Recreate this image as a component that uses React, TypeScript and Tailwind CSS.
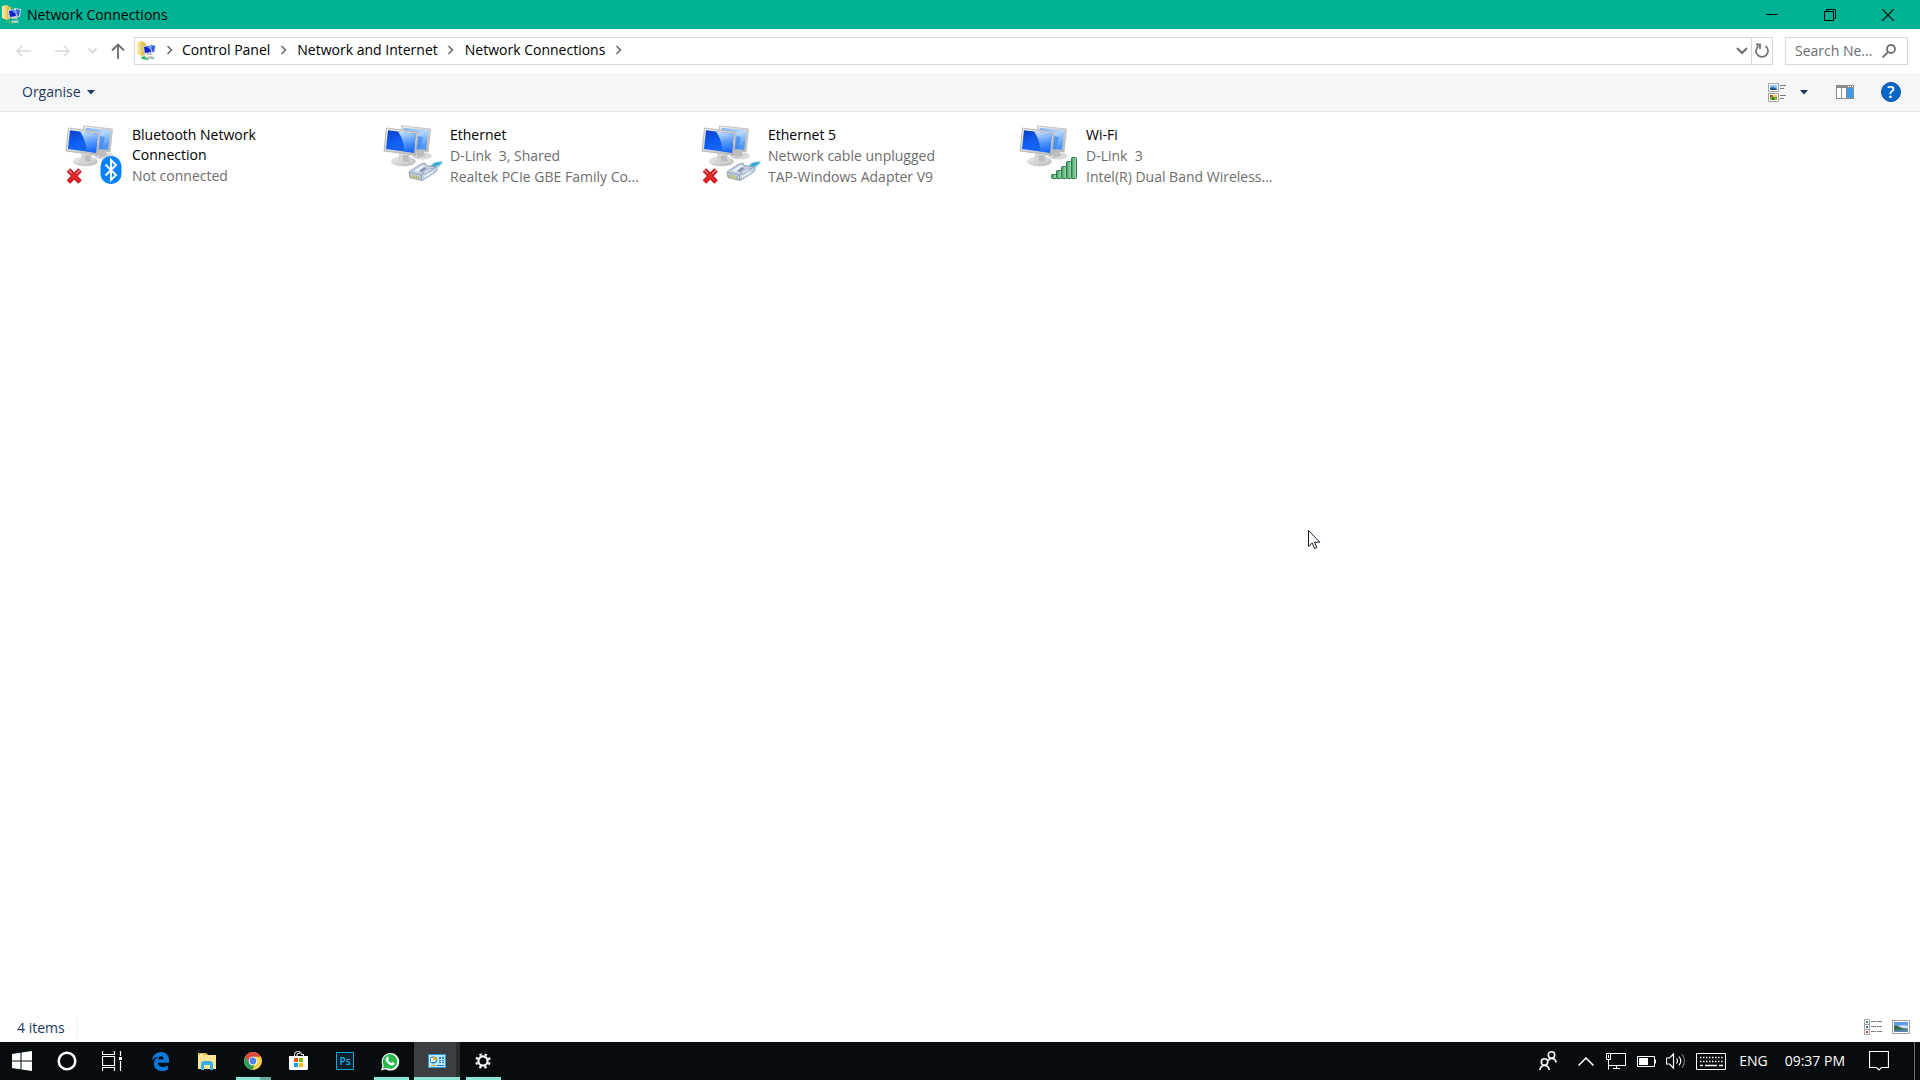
import { Fragment, ReactNode } from 'react';

type Badge = 'bluetooth' | 'cable' | 'signal';

interface Connection {
  name: string;
  details: string[];
  badge: Badge;
  disconnected?: boolean;
}

const connections: Connection[] = [
  { name: 'Bluetooth Network Connection', details: ['Not connected'], badge: 'bluetooth', disconnected: true },
  { name: 'Ethernet', details: ['D-Link  3, Shared', 'Realtek PCIe GBE Family Co...'], badge: 'cable' },
  { name: 'Ethernet 5', details: ['Network cable unplugged', 'TAP-Windows Adapter V9'], badge: 'cable', disconnected: true },
  { name: 'Wi-Fi', details: ['D-Link  3', 'Intel(R) Dual Band Wireless...'], badge: 'signal' },
];

const path = ['Control Panel', 'Network and Internet', 'Network Connections'];

// Gradients shared by the icons
const IconDefs = () => (
  <svg className="absolute h-0 w-0" aria-hidden="true">
    <defs>
      <linearGradient id="screenFront" x1="0" y1="0" x2="0.4" y2="1">
        <stop offset="0" stopColor="#0a3fc4" />
        <stop offset="0.5" stopColor="#0f5cf0" />
        <stop offset="1" stopColor="#1668fb" />
      </linearGradient>
      <linearGradient id="screenGlare" x1="0.3" y1="0" x2="0.5" y2="1">
        <stop offset="0" stopColor="#c6e0ff" />
        <stop offset="0.5" stopColor="#5c9dfa" />
        <stop offset="1" stopColor="#1767f8" />
      </linearGradient>
      <linearGradient id="screenBack" x1="0" y1="0" x2="0.4" y2="1">
        <stop offset="0" stopColor="#7db2f8" />
        <stop offset="0.45" stopColor="#b4d8ff" />
        <stop offset="1" stopColor="#4d95f2" />
      </linearGradient>
      <linearGradient id="metal" x1="0" y1="0" x2="1" y2="1">
        <stop offset="0" stopColor="#f4f4f4" />
        <stop offset="1" stopColor="#b4b4b4" />
      </linearGradient>
      <linearGradient id="signalBar" x1="0" y1="0" x2="1" y2="0">
        <stop offset="0" stopColor="#3f9763" />
        <stop offset="1" stopColor="#a8e2b8" />
      </linearGradient>
      <linearGradient id="folder" x1="0" y1="0" x2="1" y2="0">
        <stop offset="0" stopColor="#fff0b0" />
        <stop offset="1" stopColor="#d9b23c" />
      </linearGradient>
    </defs>
  </svg>
);

const NetworkIcon = ({ badge, disconnected }: { badge: Badge; disconnected?: boolean }) => (
  <svg width="60" height="62" viewBox="0 0 60 62" className="shrink-0" aria-hidden="true">
    <ellipse cx="39" cy="32" rx="10" ry="3.500" fill="#dadada" />
    <path d="M34 26l7 1 1 5-8 2z" fill="#bdbdbd" />
    <path d="M18.500 1.800l29 3.200-2.500 23-9-1-18-4z" fill="url(#metal)" stroke="#b9b9b9" strokeWidth="0.800" />
    <path d="M20.500 3.700l24.800 2.800-2.200 19.500-8-1-15-3z" fill="url(#screenBack)" />
    <path d="M35 12l5 1-3 12.500h-3z" fill="#3d86f2" opacity="0.700" />
    <ellipse cx="20.500" cy="37.500" rx="12" ry="4.500" fill="url(#metal)" stroke="#c4c4c4" strokeWidth="0.600" />
    <path d="M16 30l11 1c0 3 1 4 3 6-4 3-12 3-16 0 2-2 2.500-4 2-7z" fill="#d4d4d4" />
    <path d="M20 31l5 .5c0 3 1 4 2 6h-7z" fill="#bcbcbc" />
    <path d="M3.500 4l31.500 4.300-2 23L1 27z" fill="url(#metal)" stroke="#acacac" strokeWidth="0.800" />
    <path d="M5 6.300l27.700 3.500-1.700 19L3 25z" fill="url(#screenFront)" />
    <path d="M15 7.600l17.700 2.200-1.700 19-9.500-1.200c-.5-8-2.500-14-6.500-20z" fill="url(#screenGlare)" />
    {badge === 'bluetooth' && (
      <>
        <rect x="35.500" y="32" width="21" height="28" rx="10" ry="10.500" fill="#0a82fb" />
        <path d="M40.500 40.500l10.500 10.500-5 5V36l5 5-10.500 10.500" fill="none" stroke="#fff" strokeWidth="1.900" />
      </>
    )}
    {badge === 'cable' && (
      <>
        <path d="M47 42c3-4 6-4.500 13-5-1 3-4 7-9 9z" fill="#a4d5e8" />
        <path d="M49 41c4-3 6-2.500 10-3-2 3-5 4-8 5z" fill="#35a7d6" />
        <path d="M26 48l11-7.500 5-1.500 1 2.500 10 1.500c2 2 1 4-1 5.500l-13 8-12-3z" fill="#c3d0e3" stroke="#8996ac" strokeWidth="0.900" />
        <path d="M26.500 48.500l11.500 2.500 14-7.500M38.500 51v5.500" fill="none" stroke="#8f9db5" strokeWidth="0.900" />
        <path d="M31 47l8-5.500 4 .5-8 5.500z" fill="#eef3fa" />
        <path d="M39 48.500l8-4 3 .5-8 4.500z" fill="#e3ebf5" stroke="#8b9ab3" strokeWidth="0.600" />
        <path d="M36 47l5-4 3 1-5 4z" fill="#8494b0" />
        <path d="M27.500 50.500l9 2v3.500l-9-2z" fill="#a3ada8" />
        <path d="M29.500 51v3M32 51.500v3M34.500 52v3" stroke="#dfd56a" strokeWidth="1.200" />
        <path d="M41 52l9-5v2l-9 5z" fill="#e5edf7" />
      </>
    )}
    {badge === 'signal' && (
      <g fill="url(#signalBar)" stroke="#2d7a4d" strokeWidth="1">
        <rect x="32.500" y="50.500" width="5" height="4" rx="1" />
        <rect x="37.500" y="46.500" width="5" height="8" rx="1" />
        <rect x="42.500" y="42.500" width="5" height="12" rx="1" />
        <rect x="47.500" y="37.500" width="5" height="17" rx="1" />
        <rect x="52.500" y="33.500" width="5" height="21" rx="1" />
      </g>
    )}
    {disconnected && (
      <>
        <path d="M3.500 46l11.500 12M15 46L3.500 58" stroke="#b3141a" strokeWidth="4.800" />
        <path d="M3.500 46l11.500 12M15 46L3.500 58" stroke="#e6262b" strokeWidth="3.200" />
        <path d="M3.500 46l3.500 3.500M15 46l-3.500 3.500" stroke="#f58080" strokeWidth="1.500" />
      </>
    )}
  </svg>
);

const FolderNetworkIcon = () => (
  <svg width="20" height="20" viewBox="0 0 20 20" className="shrink-0" aria-hidden="true">
    <path d="M0 1l5-1 3 2v12l-3 1-5-2z" fill="url(#folder)" />
    <path d="M5 3l4-1v10l-4 2z" fill="#e2bf55" />
    <path d="M12 3l7 1-1 8-6-1z" fill="#d8d8d8" />
    <path d="M13 4l5 1-1 6-4-1z" fill="#2a5fe0" />
    <path d="M6 5l8-1 1 8-8 1z" fill="#cfd6e4" />
    <path d="M7 6l6-1 1 6-6 1z" fill="#0b24c8" />
    <path d="M10 6l3-1 1 4z" fill="#6ea0ff" />
    <path d="M10 12h5l1 2H9z" fill="#c4c4c4" />
    <path d="M4 16l4-1 1 2h8v1h-5l-1 1-6-1z" fill="#35b873" />
    <path d="M9 16l6-1 2 1-2 2h-5z" fill="#b5c7bf" />
  </svg>
);

const Chevron = () => (
  <svg width="8" height="10" viewBox="0 0 8 10" fill="none" stroke="#6d6d6d" strokeWidth="1.600" aria-hidden="true">
    <path d="M1.500 1l4 4-4 4" />
  </svg>
);

const Caret = () => (
  <svg width="8" height="5" viewBox="0 0 8 5" aria-hidden="true">
    <path d="M0 0h8L4 4.500z" fill="#1e395b" />
  </svg>
);

const TitleBar = () => (
  <header className="flex h-[29px] items-center justify-between bg-[#00b294]">
    <div className="flex items-center gap-[5px] pl-[2px]">
      <FolderNetworkIcon />
      <h1>Network Connections</h1>
    </div>
    <div className="flex pr-[3px]">
      <button type="button" aria-label="Minimise" className="flex h-7 w-[58px] items-center justify-center">
        <svg width="12" height="12" viewBox="0 0 12 12"><path d="M0 5.500h12" stroke="#000" /></svg>
      </button>
      <button type="button" aria-label="Restore" className="flex h-7 w-[58px] items-center justify-center">
        <svg width="12" height="12" viewBox="0 0 12 12" fill="none" stroke="#000">
          <path d="M.5 2.500h9v9h-9zM2.500 2.500v-2h9v9h-2" />
        </svg>
      </button>
      <button type="button" aria-label="Close" className="flex h-7 w-[58px] items-center justify-center">
        <svg width="12" height="12" viewBox="0 0 12 12"><path d="M0 0l12 12M12 0L0 12" stroke="#000" strokeWidth="1.200" /></svg>
      </button>
    </div>
  </header>
);

const AddressRow = () => (
  <div className="flex h-11 items-center pb-px pr-3">
    <nav aria-label="History" className="flex w-[134px] items-center pl-4">
      <button type="button" aria-label="Back" className="mr-6">
        <svg width="15" height="12" viewBox="0 0 15 12" fill="none" stroke="#d8d8d8" strokeWidth="1.500"><path d="M15 6H1M6 1L1 6l5 5" /></svg>
      </button>
      <button type="button" aria-label="Forward" className="mr-[18px]">
        <svg width="15" height="12" viewBox="0 0 15 12" fill="none" stroke="#d8d8d8" strokeWidth="1.500"><path d="M0 6h14M9 1l5 5-5 5" /></svg>
      </button>
      <button type="button" aria-label="Recent locations" className="mr-[14px]">
        <svg width="9" height="6" viewBox="0 0 9 6" fill="none" stroke="#d0d0d0" strokeWidth="1.500"><path d="M.5 .5l4 4 4-4" /></svg>
      </button>
      <button type="button" aria-label="Up">
        <svg width="14" height="16" viewBox="0 0 14 16" fill="none" stroke="#6d6d6d" strokeWidth="1.800"><path d="M7 16V1.500M1 7.500l6-6 6 6" /></svg>
      </button>
    </nav>
    <div className="flex h-7 flex-1 items-center border border-[#d9d9d9] pl-[2px]">
      <FolderNetworkIcon />
      <ol className="flex flex-1 items-center pb-px">
        <li className="flex w-[25px] justify-center"><Chevron /></li>
        {path.map((part) => (
          <Fragment key={part}>
            <li><a href="#" className="text-black">{part}</a></li>
            <li className="flex w-[27px] justify-center"><Chevron /></li>
          </Fragment>
        ))}
      </ol>
      <button type="button" aria-label="Previous locations" className="flex h-full w-[15px] items-center">
        <svg width="12" height="8" viewBox="0 0 12 8" fill="none" stroke="#6d6d6d" strokeWidth="2"><path d="M1 1l5 5 5-5" /></svg>
      </button>
      <button type="button" aria-label="Refresh" className="flex h-full w-[21px] items-center justify-center border-l border-[#d9d9d9]">
        <svg width="14" height="15" viewBox="0 0 14 15" fill="none" stroke="#757575" strokeWidth="1.800">
          <path d="M10.500 3A6 6 0 1 1 3.500 3M1 1.500h4v4.500" />
        </svg>
      </button>
    </div>
    <form role="search" className="ml-3 flex h-7 w-[123px] items-center border border-[#d9d9d9] pl-[9px] pr-[11px]">
      <input
        type="text"
        aria-label="Search Network Connections"
        placeholder="Search Ne..."
        className="w-full min-w-0 flex-1 outline-none placeholder:text-[#6d6d6d]"
      />
      <button type="button" aria-label="Search">
        <svg width="14" height="14" viewBox="0 0 14 14" fill="none" stroke="#6d6d6d" strokeWidth="1.800">
          <circle cx="9" cy="5" r="4" />
          <path d="M6 8l-5.500 5.500" />
        </svg>
      </button>
    </form>
  </div>
);

const CommandBar = () => (
  <div className="flex h-[39px] items-center justify-between border-b border-[#e5e7ea] bg-[#f4f6f8] pl-[22px] pr-[19px]">
    <button type="button" className="flex items-center gap-[6px] text-[#1e395b]">
      Organise <Caret />
    </button>
    <div className="flex items-center">
      <button type="button" aria-label="Change your view" className="mr-[14px]">
        <svg width="18" height="19" viewBox="0 0 18 19">
          <g fill="#fff" stroke="#a3a3a3">
            <path d="M.5 .5h10v8H.5zM.5 10.500h10v8H.5z" />
          </g>
          <path d="M2 2h7v5H2z" fill="#8cc0f0" />
          <path d="M2 5l3-1 4 2v1H2z" fill="#1f5c82" />
          <path d="M2 12h7v5H2z" fill="#7fae3a" />
          <path d="M2 12h2v2H2z" fill="#c43a2a" />
          <path d="M5 12h4v2H5z" fill="#e8ca4a" />
          <path d="M4 14h2v3H4z" fill="#2f6e2b" />
          <path d="M12 2.500h6M12 5.500h4M12 12.500h6M12 15.500h4" stroke="#7d7d7d" />
        </svg>
      </button>
      <button type="button" aria-label="More options" className="mr-7"><Caret /></button>
      <button type="button" aria-label="Show the preview pane" className="mr-[27px]">
        <svg width="18" height="14" viewBox="0 0 18 14">
          <path d="M0 0h18v14H0z" fill="#8b8b8b" />
          <path d="M1 3h4v10H1zM6 3h4v10H6z" fill="#fff" />
          <path d="M11 3h6v10h-6z" fill="#3f9ae6" />
          <path d="M12 1h1v1h-1zM14 1h1v1h-1zM16 1h1v1h-1z" fill="#fff" />
        </svg>
      </button>
      <button
        type="button"
        aria-label="Get help"
        className="flex h-5 w-5 items-center justify-center rounded-full border border-[#0a4f9c] bg-[#0667cb] text-base font-semibold leading-4 text-white"
      >
        ?
      </button>
    </div>
  </div>
);

const StatusBar = () => (
  <footer className="flex h-[30px] items-center justify-between pl-[17px] pr-[10px] text-[#1e395b]">
    <p className="border-r border-[#f0f0f0] pr-3 pt-px">4 items</p>
    <div className="flex gap-[10px]">
      <button type="button" aria-label="Details view">
        <svg width="18" height="16" viewBox="0 0 18 16">
          <path d="M.5 .5h5v15h-5zM.5 5.500h5M.5 10.500h5" fill="#fff" stroke="#a3a3a3" />
          <path d="M2 2h2v2H2z" fill="#3d8a7c" />
          <path d="M2 7h2v2H2z" fill="#3f67b5" />
          <path d="M2 12h2v2H2z" fill="#d1402b" />
          <path d="M7 2.500h5M13 2.500h5M7 7.500h5M13 7.500h5M7 12.500h5M13 12.500h5" stroke="#7d7d7d" />
        </svg>
      </button>
      <button type="button" aria-label="Large icons view">
        <svg width="18" height="14" viewBox="0 0 18 14">
          <path d="M.5 .5h17v13H.5z" fill="#fff" stroke="#9d9d9d" />
          <path d="M2 2h14v10H2z" fill="#76aef0" />
          <path d="M2 2h14v3l-7 1-7-2z" fill="#5c9aea" />
          <path d="M6 6l5-1 5 1v2H7z" fill="#cfe4f7" />
          <path d="M2 5l4 1 4 2 6 1v1H2z" fill="#3a6d4c" />
          <path d="M2 10l14-1v3H2z" fill="#5785a8" />
        </svg>
      </button>
    </div>
  </footer>
);

const apps: { label: string; state?: 'open' | 'stacked' | 'active'; icon: ReactNode }[] = [
  {
    label: 'Microsoft Edge',
    icon: (
      <svg width="18" height="19" viewBox="0 0 18 19">
        <path d="M0 8.500C.7 3.500 4 0 9.200 0 14.700 0 17 4.200 17 8.200v2.600H5.900c.2 4.700 6.100 5.100 10 2.700v3.900C10.500 20.500 1.900 19 1.900 11.800c0-3.600 2-6 5.200-7.300C3.800 4.800 1.500 6.300 0 8.500zm6-1.200h5.700c0-4.300-5-3.900-5.700 0z" fill="#0a79d8" />
      </svg>
    ),
  },
  {
    label: 'File Explorer',
    icon: (
      <svg width="18" height="17" viewBox="0 0 18 17">
        <path d="M0 0h8l2 2h8v14H0z" fill="#ffe493" />
        <path d="M0 0h8l1.500 2H0z" fill="#e8b339" />
        <path d="M2 1h3v1H2z" fill="#fff" />
        <path d="M3 17V10l2-2h8l2 2v7h-3v-5H6v5z" fill="#35b1e7" />
      </svg>
    ),
  },
  {
    label: 'Google Chrome',
    state: 'stacked',
    icon: (
      <svg width="18" height="18" viewBox="0 0 18 18">
        <circle cx="9" cy="9" r="9" fill="#fbd04a" />
        <path d="M9 9L4.900 11.400 1.200 4.500A9 9 0 0 1 16.800 4.700H9z" fill="#df4a3d" />
        <path d="M1.200 4.500L5.300 11.400a4.200 4.200 0 0 0 5.300 1.600L8.300 18A9 9 0 0 1 1.200 4.500z" fill="#2d9e58" />
        <circle cx="9" cy="9" r="4.300" fill="#fff" />
        <circle cx="9" cy="9" r="3.400" fill="#4a86ee" />
      </svg>
    ),
  },
  {
    label: 'Microsoft Store',
    icon: (
      <svg width="20" height="20" viewBox="0 0 20 20">
        <path d="M5.500 6V3.500a3 3 0 0 1 3-3h1a3 3 0 0 1 3 3h2V6M8 5V3l3-1" fill="none" stroke="#fff" />
        <path d="M0 5h19v13l-1 1H1l-1-1z" fill="#fff" />
        <path d="M5 7h4v4H5z" fill="#f25022" />
        <path d="M10 7h4v4h-4z" fill="#7fba00" />
        <path d="M5 12h4v4H5z" fill="#00a4ef" />
        <path d="M10 12h4v4h-4z" fill="#ffb900" />
      </svg>
    ),
  },
  {
    label: 'Photoshop',
    icon: (
      <span className="flex h-[18px] w-[18px] items-center justify-center border border-[#10a6d4] bg-[#061f2b] text-[10px] font-semibold leading-3 text-[#15b5e5]">
        Ps
      </span>
    ),
  },
  {
    label: 'WhatsApp',
    state: 'open',
    icon: (
      <svg width="20" height="19" viewBox="0 0 20 19">
        <path d="M0 18.500L1.500 13.600A8.800 8.800 0 1 1 4.700 17.200z" fill="#fff" />
        <path d="M1.800 16.700l1-3.400a7.300 7.300 0 1 1 2.500 2.500z" fill="#27b94a" />
        <path d="M5.900 4.800c.9-.8 1.400-.3 2 1.500.2.700-.2 1-.7 1.600.9 1.800 2 2.500 3.400 3.200l1-1.100 2 1.100c.2 1.800-1.200 2.600-2.700 2.500-3-.4-5.700-3.200-6.200-5.800 0-1.300.6-2.300 1.200-3z" fill="#fff" />
      </svg>
    ),
  },
  {
    label: 'Network Connections',
    state: 'active',
    icon: (
      <svg width="18" height="14" viewBox="0 0 18 14">
        <path d="M0 0h18v14H0z" fill="#2b9be0" />
        <path d="M1 1h16v12H1z" fill="#bfe6fb" />
        <circle cx="5.500" cy="6" r="3.500" fill="#1d85cc" />
        <path d="M5 2.500a3.500 3.500 0 0 1 3.500 3.500H5z" fill="#f4a81d" />
        <path d="M5 6h3l-1 2H3V4h2z" fill="#fff" />
        <path d="M11 3h2v2h-2zM14 3h2v2h-2zM11 6h2v1h-2zM14 6h2v1h-2zM11 8h2v1h-2zM14 8h2v1h-2z" fill="#1d7fc4" />
        <path d="M3 11h5v1H3z" fill="#f4a81d" />
        <path d="M9 11h7v1H9z" fill="#1d7fc4" />
      </svg>
    ),
  },
  {
    label: 'Settings',
    state: 'open',
    icon: (
      <svg width="16" height="16" viewBox="0 0 16 16" fill="none" stroke="#fff">
        <circle cx="8" cy="8" r="4.600" strokeWidth="2.200" />
        <circle cx="8" cy="8" r="6.700" strokeWidth="2.200" strokeDasharray="2.400 2.862" strokeDashoffset="-1.430" />
      </svg>
    ),
  },
];

const Taskbar = () => (
  <div className="flex h-[38px] items-stretch bg-[#070c0e] text-white">
    <button type="button" aria-label="Start" className="flex w-[44px] items-center justify-center">
      <svg width="20" height="20" viewBox="0 0 20 20" fill="#fff">
        <path d="M0 3l8.500-1.200v7.700H0zM9.500 1.600L20 0v9.500H9.500zM0 10.500h8.500v7.700L0 17zM9.500 10.500H20V20L9.500 18.400z" />
      </svg>
    </button>
    <button type="button" aria-label="Cortana" className="flex w-[45px] items-center justify-center">
      <svg width="20" height="20" viewBox="0 0 20 20" fill="none" stroke="#fff" strokeWidth="2.500"><circle cx="10" cy="10" r="8.300" /></svg>
    </button>
    <button type="button" aria-label="Task view" className="mr-1 flex w-[45px] items-center justify-center">
      <svg width="20" height="20" viewBox="0 0 20 20" fill="none" stroke="#fff" strokeWidth="1.200">
        <path d="M.5 0v3.500h12V0M.5 5.500h12v9H.5zM.5 20v-3.500h12V20M18.500 0v5M18.500 10v10" />
        <path d="M17 6h3v3h-3z" fill="#fff" stroke="none" />
      </svg>
    </button>
    {apps.map((app) => (
      <button
        key={app.label}
        type="button"
        aria-label={app.label}
        className={`relative flex w-[46px] items-center justify-center ${app.state === 'active' ? 'border-r-4 border-[#292e30] bg-[#3b3f41] bg-clip-padding pl-1' : ''}`}
      >
        {app.icon}
        {app.state === 'active' && <span className="absolute -right-1 bottom-0 left-0 h-[3px] bg-[#8be5d6]" />}
        {app.state === 'open' && <span className="absolute bottom-0 left-[6px] h-[3px] w-[35px] bg-[#8be5d6]" />}
        {app.state === 'stacked' && (
          <span className="absolute bottom-0 left-[6px] h-[3px] w-[35px] border-r-[11px] border-[#67a99e] bg-[#8be5d6]" />
        )}
      </button>
    ))}
    <div className="ml-auto flex items-center">
      <button type="button" aria-label="People" className="mr-[21px]">
        <svg width="18" height="20" viewBox="0 0 18 20" fill="none" stroke="#fff" strokeWidth="1.600">
          <circle cx="12.500" cy="4" r="3.200" />
          <circle cx="5.500" cy="11" r="3.200" />
          <path d="M9 10c1.500-3.500 7-3.500 8.300 1.500M.8 19c1-6 8.500-6 9.500 0" />
        </svg>
      </button>
      <button type="button" aria-label="Show hidden icons" className="mr-3">
        <svg width="16" height="9" viewBox="0 0 16 9" fill="none" stroke="#fff" strokeWidth="1.500"><path d="M.5 8.500L8 1l7.500 7.500" /></svg>
      </button>
      <button type="button" aria-label="Network" className="mr-[11px]">
        <svg width="20" height="17" viewBox="0 0 20 17" fill="none" stroke="#fff">
          <path d="M5 .5h14.500v12H2.500V7M.5 .5h4v6h-4zM2.500 2v3M2.500 12v4.500M10.500 12.500v3M7 15.500h7" />
        </svg>
      </button>
      <button type="button" aria-label="Battery" className="mr-[10px]">
        <svg width="19" height="11" viewBox="0 0 19 11" fill="none" stroke="#fff">
          <path d="M.5 .5h17v10H.5zM18.500 3.500v4" />
          <path d="M2 2h9v7H2z" fill="#fff" stroke="none" />
        </svg>
      </button>
      <button type="button" aria-label="Volume" className="mr-[10px]">
        <svg width="20" height="18" viewBox="0 0 20 18" fill="none" stroke="#fff" strokeWidth="1.200">
          <path d="M.5 6h3L7.500 2v14l-4-4h-3zM10.500 6.500q2 2.500 0 5M13 4.500q3.500 4.500 0 9" />
          <path d="M16 2q5 7 0 14" stroke="#777" />
        </svg>
      </button>
      <button type="button" aria-label="Touch keyboard" className="mr-[13px]">
        <svg width="30" height="17" viewBox="0 0 30 17" fill="none" stroke="#fff">
          <path d="M.5 .5h29v16H.5z" />
          <path d="M4 4.500h23M4 8.500h23" strokeWidth="1.500" strokeDasharray="1.500 1.500" />
          <path d="M4 12.500h3M9 12.500h12M23 12.500h4" strokeWidth="1.300" />
        </svg>
      </button>
      <button type="button" className="mr-[17px]">ENG</button>
      <button type="button" className="mr-6">09:37 PM</button>
      <button type="button" aria-label="Notifications" className="mr-[25px]">
        <svg width="20" height="20" viewBox="0 0 20 20" fill="none" stroke="#fff" strokeWidth="1.200">
          <path d="M.5 .5h19v16h-7L10 19l-2.500-2.500h-7z" />
        </svg>
      </button>
      <button type="button" aria-label="Show desktop" className="h-[38px] w-[6px] border-l border-[#6a6e70]" />
    </div>
  </div>
);

const App = () => {
  return (
    <div className="relative flex min-h-screen flex-col bg-white font-['Open_Sans',sans-serif] text-sm leading-5 text-black">
      <IconDefs />
      <TitleBar />
      <AddressRow />
      <CommandBar />
      <main className="flex-1">
        <ul className="flex flex-wrap pl-[65px] pt-3">
          {connections.map((connection) => (
            <li key={connection.name} className="w-[318px]">
              <button type="button" className="flex items-start gap-[7px] text-left">
                <NetworkIcon badge={connection.badge} disconnected={connection.disconnected} />
                <span className="block w-[200px] pt-px">
                  <span className="block w-[150px]">{connection.name}</span>
                  {connection.details.map((line) => (
                    <span key={line} className="block whitespace-pre leading-[21px] text-[#6d6d6d]">{line}</span>
                  ))}
                </span>
              </button>
            </li>
          ))}
        </ul>
      </main>
      <StatusBar />
      <Taskbar />
      {/* Mouse pointer */}
      <svg width="13" height="20" viewBox="0 0 13 20" className="absolute left-[1308px] top-[530px]" aria-hidden="true">
        <path d="M.5 .5v16l3.700-3.500 2.400 5.500 2.300-1-2.400-5.300h5.300z" fill="#fff" stroke="#1a1a2a" />
      </svg>
    </div>
  );
};

export default App;
